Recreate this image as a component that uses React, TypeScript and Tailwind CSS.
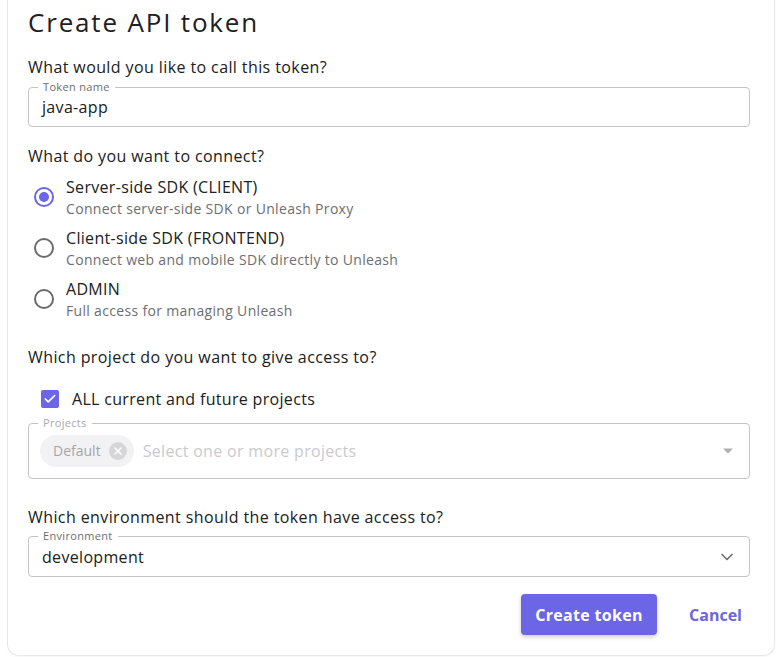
import { Check, X, ChevronDown } from 'lucide-react';

const purple = '#6c65e5';

type RadioOption = { label: string; description: string; checked?: boolean };

const radioOptions: RadioOption[] = [
  { label: 'Server-side SDK (CLIENT)', description: 'Connect server-side SDK or Unleash Proxy', checked: true },
  { label: 'Client-side SDK (FRONTEND)', description: 'Connect web and mobile SDK directly to Unleash' },
  { label: 'ADMIN', description: 'Full access for managing Unleash' },
];

function Radio({ checked }: { checked?: boolean }) {
  return (
    <span
      className={`flex h-5 w-5 shrink-0 items-center justify-center rounded-full border-2 ${
        checked ? 'border-[#6c65e5]' : 'border-[#6b6b6d]'
      }`}
    >
      {checked && <span className="h-[10px] w-[10px] rounded-full bg-[#6c65e5]" />}
    </span>
  );
}

function FieldLabel({ children, muted }: { children: string; muted?: boolean }) {
  return (
    <span
      className={`absolute -top-[8px] left-[9px] bg-white px-[5px] text-[11px] leading-[14px] ${
        muted ? 'text-[#a9a9ad]' : 'text-[#6e6e70]'
      }`}
    >
      {children}
    </span>
  );
}

export default function App() {
  return (
    <div
      className="h-[657px] w-[782px] overflow-hidden bg-white tracking-[0.02em] text-[#202021]"
      style={{ fontFamily: '"Open Sans", Lato, sans-serif' }}
    >
      <div className="ml-[7px] w-[768px] rounded-b-[12px] border-x border-b border-[#e8e8ec] pb-[20px] pl-5 pr-6 pt-[6px] shadow-[0_1px_2px_rgba(0,0,0,0.04)]">
        <h1 className="text-[26px] leading-8 font-normal tracking-[0.07em]">Create API token</h1>

        <p className="mt-[17px] text-base leading-6 tracking-[0.025em]">What would you like to call this token?</p>
        <div className="relative mt-2 flex h-10 items-center rounded-[4px] border border-[#c4c4c6] px-[13px]">
          <FieldLabel>Token name</FieldLabel>
          <span className="text-base">java-app</span>
        </div>

        <p className="mt-[17px] text-base leading-6 tracking-[0.025em]">What do you want to connect?</p>
        <div className="mt-[7px] flex flex-col gap-[7px]">
          {radioOptions.map((option) => (
            <div key={option.label} className="flex items-center pl-[6px]">
              <Radio checked={option.checked} />
              <div className="ml-3 flex flex-col">
                <span className="text-base leading-6">{option.label}</span>
                <span className="text-sm leading-5 text-[#6e6e70]">{option.description}</span>
              </div>
            </div>
          ))}
        </div>

        <p className="mt-6 text-base leading-6 tracking-[0.025em]">Which project do you want to give access to?</p>
        <div className="mt-[18px] flex h-6 items-center pl-[13px]">
          <span className="flex h-[18px] w-[18px] items-center justify-center rounded-[2px] bg-[#6c65e5]">
            <Check className="h-[14px] w-[14px] text-white" strokeWidth={3} />
          </span>
          <span className="ml-[13px] text-base">ALL current and future projects</span>
        </div>
        <div className="relative mt-3 flex h-14 items-center rounded-[4px] border border-[#c4c4c6] pl-[11px] pr-4">
          <FieldLabel muted>Projects</FieldLabel>
          <span className="flex h-8 items-center rounded-full bg-[#f2f2f4] pl-[13px] pr-[7px] text-sm tracking-normal text-[#a6a6aa]">
            Default
            <span className="ml-2 flex h-[18px] w-[18px] items-center justify-center rounded-full bg-[#d6d6d9]">
              <X className="h-3 w-3 text-white" strokeWidth={3} />
            </span>
          </span>
          <span className="ml-[9px] text-base text-[#cacacd]">Select one or more projects</span>
          <svg className="ml-auto h-[6px] w-[10px]" viewBox="0 0 10 5">
            <path d="M0 0h10L5 5z" fill="#b0b0b4" />
          </svg>
        </div>

        <p className="mt-[26px] text-base leading-6 tracking-[0.025em]">Which environment should the token have access to?</p>
        <div className="relative mt-[7px] flex h-[41px] items-center rounded-[4px] border border-[#c4c4c6] pl-[13px] pr-3">
          <FieldLabel>Environment</FieldLabel>
          <span className="text-base">development</span>
          <ChevronDown className="ml-auto h-5 w-5 text-[#6e6e70]" strokeWidth={2} />
        </div>

        <div className="mt-[17px] flex items-center justify-end">
          <button
            className="h-[41px] w-[136px] rounded-[4px] text-base font-bold text-white shadow-[0_2px_4px_rgba(0,0,0,0.2)]"
            style={{ backgroundColor: purple }}
          >
            Create token
          </button>
          <button className="ml-6 h-[41px] px-2 text-base font-bold tracking-normal text-[#6c65e5]">Cancel</button>
        </div>
      </div>
    </div>
  );
}
